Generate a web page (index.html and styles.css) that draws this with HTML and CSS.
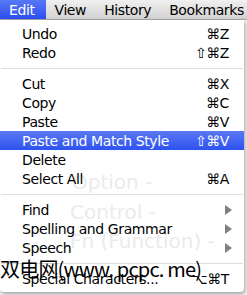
FILE: index.html
```html
<!DOCTYPE html>
<html lang="en">
<head>
    <meta charset="UTF-8">
    <title>Edit Menu</title>
    <link rel="stylesheet" href="styles.css">
</head>
<body>

    <div class="menubar">
        <span class="title active">Edit</span>
        <span class="title">View</span>
        <span class="title">History</span>
        <span class="title">Bookmarks</span>
    </div>

    <div class="backdrop">
        <div class="menu">
            <div class="item"><span>Undo</span><span class="key">⌘Z</span></div>
            <div class="item"><span>Redo</span><span class="key">⇧⌘Z</span></div>
            <div class="sep"></div>
            <div class="item"><span>Cut</span><span class="key">⌘X</span></div>
            <div class="item"><span>Copy</span><span class="key">⌘C</span></div>
            <div class="item"><span>Paste</span><span class="key">⌘V</span></div>
            <div class="item selected"><span>Paste and Match Style</span><span class="key">⇧⌘V</span></div>
            <div class="item"><span>Delete</span></div>
            <div class="item"><span>Select All</span><span class="key">⌘A</span></div>
            <div class="sep"></div>
            <div class="item"><span>Find</span><span class="arrow"></span></div>
            <div class="item"><span>Spelling and Grammar</span><span class="arrow"></span></div>
            <div class="item"><span>Speech</span><span class="arrow"></span></div>
            <div class="sep"></div>
            <div class="item"><span>Special Characters...</span><span class="key">⌥⌘T</span></div>
        </div>

        <!-- faint page text showing through the menu -->
        <div class="ghost ghost-option">Option -</div>
        <div class="ghost ghost-control">Control -</div>
        <div class="ghost ghost-fn">Fn (Function) -</div>

        <div class="watermark">双电网(www. pcpc. me)</div>
    </div>

</body>
</html>
```

FILE: styles.css
```css
body {
    margin: 0;
    width: 247px;
    height: 295px;
    overflow: hidden;
    background: #ffffff;
    font-family: "DejaVu Sans", "Noto Sans CJK SC", sans-serif;
    color: #000;
}
.menubar {
    display: flex;
    height: 20px;
    background: linear-gradient(#f0f0f0, #d2d2d2);
    border-bottom: 1px solid #a8a8a8;
    box-sizing: border-box;
    white-space: nowrap;
    overflow: hidden;
}
.title {
    font-size: 14px;
    letter-spacing: -0.4px;
    line-height: 20px;
    padding: 0 9px;
}
.title.active {
    color: #fff;
    background: linear-gradient(#5878f6, #2b4ef0);
    padding: 0 11px 0 9px;
}
.backdrop {
    position: relative;
    height: 275px;
    background: #f4f4f4;
}
.menu {
    width: 244px;
    padding: 4px 0;
    background: #ffffff;
    box-shadow: 1px 2px 4px rgba(0, 0, 0, 0.35);
    border-radius: 0 0 4px 4px;
    position: relative;
}
.item {
    display: flex;
    justify-content: space-between;
    align-items: center;
    height: 19px;
    padding: 0 15px 0 22px;
    font-size: 14px;
    letter-spacing: -0.4px;
    position: relative;
    z-index: 3;
}
.item.selected {
    color: #fff;
    background: linear-gradient(#5a79f5, #2e52ef);
}
.arrow {
    width: 0;
    height: 0;
    border-top: 5px solid transparent;
    border-bottom: 5px solid transparent;
    border-left: 7px solid #808080;
    margin-right: -3px;
}
.sep {
    height: 12px;
    position: relative;
}
.sep::after {
    content: "";
    position: absolute;
    left: 1px;
    right: 1px;
    top: 6px;
    border-top: 1px solid #dedede;
}
.ghost {
    position: absolute;
    left: 72px;
    font-size: 20px;
    color: #ebebeb;
    z-index: 2;
    white-space: nowrap;
}
.ghost-option { top: 150px; }
.ghost-control { top: 180px; left: 70px; }
.ghost-fn { top: 209px; left: 70px; }
.watermark {
    position: absolute;
    left: 0;
    top: 236px;
    font-family: "Noto Sans CJK SC", sans-serif;
    font-size: 20px;
    letter-spacing: -0.8px;
    line-height: 26px;
    white-space: nowrap;
    z-index: 5;
}
```
